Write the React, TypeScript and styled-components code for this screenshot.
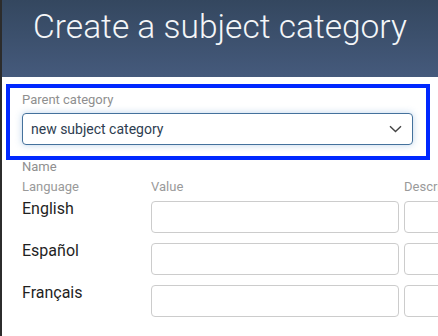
import React, { useState, ChangeEvent } from 'react';
import styled, { createGlobalStyle } from 'styled-components';

const GlobalStyle = createGlobalStyle`
  html, body {
    margin: 0;
    padding: 0;
    background: #2c2c2c;
    overflow: hidden;
  }
  body {
    font-family: Roboto, "Liberation Sans", sans-serif;
  }
`;

const Dialog = styled.div`
  margin-left: 2px;
  width: 436px;
  height: 336px;
  background: #ffffff;
  overflow: hidden;
`;

const Header = styled.div`
  height: 77px;
  box-sizing: border-box;
  padding-top: 7px;
  background: linear-gradient(180deg, #34475f 0%, #455a7c 100%);
`;

const Title = styled.h1`
  margin: 0;
  font-size: 33.5px;
  line-height: 40px;
  font-weight: 300;
  color: #f4f6f8;
  text-align: center;
`;

const Body = styled.div`
  padding: 0 0 0 20px;
`;

const FocusGroup = styled.div`
  margin: 11px 0 0 -12px;
  width: 416px;
  box-sizing: border-box;
  padding: 4px 13px 11px 12px;
  outline: 4px solid #0028ff;
`;

const FieldLabel = styled.div<{ $mt?: number; $mb?: number }>`
  font-size: 13px;
  line-height: 16px;
  color: #8f8f8f;
  margin-top: ${p => p.$mt ?? 0}px;
  margin-bottom: ${p => p.$mb ?? 0}px;
  white-space: nowrap;
`;

const SelectBox = styled.div`
  height: 32px;
  box-sizing: border-box;
  border: 1px solid #44719c;
  border-radius: 4px;
  box-shadow: 0 0 7px rgba(110, 160, 210, 0.45);
  display: flex;
  align-items: center;
  padding: 0 10px 0 8px;
`;

const SelectValue = styled.select`
  appearance: none;
  flex: 1;
  border: none;
  outline: none;
  background: transparent;
  font-family: Roboto, "Liberation Sans", sans-serif;
  font-size: 14px;
  color: #2e3d50;
  padding: 0;
  margin: 0;
`;

const Chevron = styled.svg`
  flex: none;
  pointer-events: none;
`;

const Grid = styled.div`
  display: grid;
  grid-template-columns: 124px 248px 248px;
  column-gap: 5px;
  row-gap: 10px;
  margin-top: 1px;
`;

const ColumnHead = styled.div`
  font-size: 13px;
  line-height: 16px;
  color: #9a9a9a;
  white-space: nowrap;
  margin-bottom: -4px;
`;

const LangName = styled.div`
  font-size: 16px;
  line-height: 16px;
  color: #1f1f1f;
`;

const TextInput = styled.input`
  height: 32px;
  width: 100%;
  box-sizing: border-box;
  border: 1px solid #cccccc;
  border-radius: 4px;
  padding: 0 8px;
  font-family: Roboto, "Liberation Sans", sans-serif;
  font-size: 14px;
  outline: none;
`;

const languages = ['English', 'Español', 'Français'];

const App: React.FC = () => {
  const [parent, setParent] = useState<string>('new subject category');
  const [values, setValues] = useState<Record<string, string>>({});

  const update = (key: string) => (e: ChangeEvent<HTMLInputElement>) =>
    setValues({ ...values, [key]: e.target.value });

  return (
    <>
      <GlobalStyle />
      <Dialog>
        <Header>
          <Title>Create a subject category</Title>
        </Header>
        <Body>
          <FocusGroup>
            <FieldLabel $mb={5}>Parent category</FieldLabel>
            <SelectBox>
              <SelectValue value={parent} onChange={e => setParent(e.target.value)}>
                <option>new subject category</option>
              </SelectValue>
              <Chevron width="13" height="8" viewBox="0 0 13 8">
                <path d="M1 1.2 L6.5 6.6 L12 1.2" fill="none" stroke="#454545" strokeWidth="1.4" />
              </Chevron>
            </SelectBox>
          </FocusGroup>
          <FieldLabel $mt={3} $mb={4}>Name</FieldLabel>
          <Grid>
            <ColumnHead>Language</ColumnHead>
            <ColumnHead>Value</ColumnHead>
            <ColumnHead>Description</ColumnHead>
            {languages.map(lang => (
              <React.Fragment key={lang}>
                <LangName>{lang}</LangName>
                <TextInput value={values[lang + '-v'] ?? ''} onChange={update(lang + '-v')} />
                <TextInput value={values[lang + '-d'] ?? ''} onChange={update(lang + '-d')} />
              </React.Fragment>
            ))}
          </Grid>
        </Body>
      </Dialog>
    </>
  );
};

export default App;
